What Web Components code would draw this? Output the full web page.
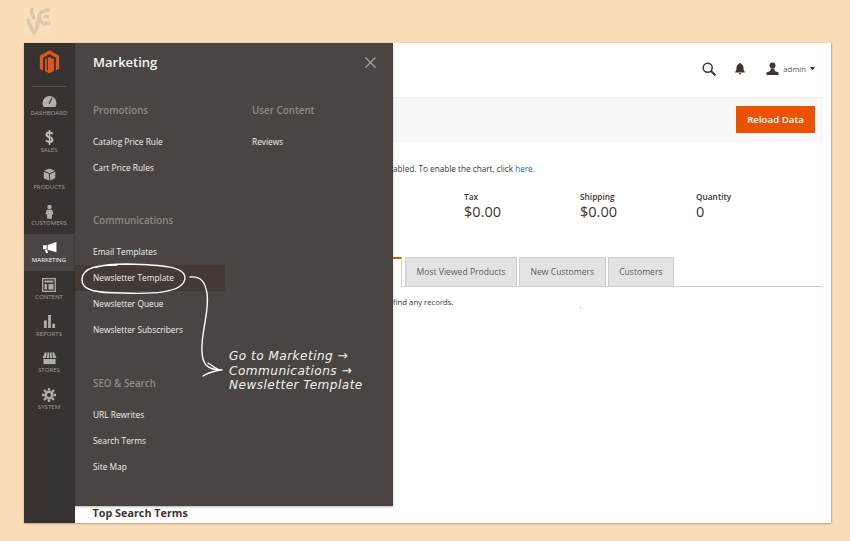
<!DOCTYPE html>
<html><head><meta charset="utf-8"><title>Marketing</title>
<style>
html,body{margin:0;padding:0;background:#fbdcb8;width:850px;height:541px;overflow:hidden;font-family:"Open Sans",sans-serif}
</style></head><body>
<rs-page>
  <rs-sidebar slot="side">
    <rs-nav label="DASHBOARD"><svg viewBox="0 0 16 14" width="15" height="13"><path fill="#b4b0ac" d="M8 1a7.500 7.500 0 0 0-7.500 7.500c0 1.800.5 3.200 1.400 4.500h12.200c.9-1.300 1.400-2.700 1.400-4.500A7.500 7.500 0 0 0 8 1z"/><path stroke="#373330" stroke-width="1.200" d="M7.500 9.500 10.800 3"/></svg></rs-nav>
    <rs-nav label="SALES"><svg viewBox="0 0 9 15" width="9" height="15"><path fill="none" stroke="#c4c0bc" stroke-width="1.900" d="M7.800 4C7 2.900 5.800 2.500 4.500 2.500 2.800 2.500 1.500 3.200 1.500 4.700c0 3 6 1.700 6 5 0 1.500-1.400 2.300-3 2.300-1.500 0-2.800-.6-3.500-1.700"/><path stroke="#c4c0bc" stroke-width="1.500" d="M4.500 0v15"/></svg></rs-nav>
    <rs-nav label="PRODUCTS"><svg viewBox="0 0 14 14" width="13" height="13"><path fill="#b0aca8" d="M7 .5 13 3 7 5.600 1 3zM.8 4l5.700 2.500v7L.8 11zM13.200 4 7.500 6.500v7l5.700-2.500z"/></svg></rs-nav>
    <rs-nav label="CUSTOMERS"><svg viewBox="0 0 10 16" width="9" height="15"><circle cx="5" cy="3" r="2.500" fill="#b0aca8"/><path fill="#b0aca8" d="M2 6h6l1.500 5H8l-.5 5h-5L2 11H.5z"/></svg></rs-nav>
    <rs-nav label="MARKETING" active><svg viewBox="0 0 16 13" width="15" height="12"><path fill="#fff" d="M15.500 0v11L6 8.300V3.200z"/><path fill="#fff" d="M1 3.600h4v4.300H1zM3 8.500h2.500l1 3.500H4.200z"/></svg></rs-nav>
    <rs-nav label="CONTENT"><svg viewBox="0 0 14 14" width="14" height="14"><path fill="none" stroke="#b0aca8" stroke-width="1.300" d="M.7.700h12.600v12.600H.7z"/><path fill="#b0aca8" d="M2.500 2.500h9v2h-9zM2.500 6h2.500v5.500H2.500zM6.500 6h5v5.500h-5z"/></svg></rs-nav>
    <rs-nav label="REPORTS"><svg viewBox="0 0 14 14" width="13" height="13"><path fill="#b0aca8" d="M1 6h3v8H1zM5.500 0h3v14h-3zM10 9.500h3V14h-3z"/></svg></rs-nav>
    <rs-nav label="STORES"><svg viewBox="0 0 16 14" width="15" height="13"><path fill="#b0aca8" d="M3 .5h10l2.500 6H.5z"/><path fill="#b0aca8" d="M1.500 7.500h13V13h-13z"/><path stroke="#373330" stroke-width=".8" d="M5.500 .5 4.500 6.500M8 .5v6M10.500 .5l1 6"/></svg></rs-nav>
    <rs-nav label="SYSTEM"><svg viewBox="0 0 14 14" width="14" height="14"><circle cx="7" cy="7" r="3.300" fill="none" stroke="#b0aca8" stroke-width="2.600"/><path stroke="#b0aca8" stroke-width="2.400" d="M7 0v2.500M7 11.500V14M0 7h2.500M11.500 7H14M2 2l1.800 1.800M10.200 10.200 12 12M12 2l-1.800 1.800M3.800 10.200 2 12"/></svg></rs-nav>
  </rs-sidebar>
  <rs-main slot="main"></rs-main>
  <rs-menu slot="main-over"></rs-menu>
</rs-page>
<script>
function def(name,html,init){
  customElements.define(name,class extends HTMLElement{
    constructor(){super();this.attachShadow({mode:'open'}).innerHTML=html;}
    connectedCallback(){if(init)init(this);}
  });
}
def('rs-page',`<style>
:host{display:block;width:850px;height:541px;box-sizing:border-box;padding:8px 19px 18px 24px}
.mark{display:block;height:27px;margin-bottom:8px;width:27px}
.win{display:flex;height:480px;box-shadow:0 1px 2px rgba(120,90,50,.45),1px 0 1px rgba(120,90,50,.2);background:#fff}
.content{position:relative;flex:1;min-width:0}
.over{position:absolute;left:0;top:0}
</style>
<svg class="mark" viewBox="0 0 27 27"><rect width="27" height="27" fill="#fadfbf"/><g fill="none" stroke="#dfc8a8" stroke-width="3.600" stroke-linecap="round"><path d="M8 1c-1 3 0 6 2 9M4 12c1 4 3 8 6 13M11 24c2-4 3-7 3-11"/><path d="M25 2c-6 0-10 3-10 7 0 5 5 8 10 6"/></g><path fill="#dfc8a8" d="M20 7h5v3h-5z"/></svg>
<div class="win"><slot name="side"></slot><div class="content"><slot name="main"></slot><div class="over"><slot name="main-over"></slot></div></div></div>`);

def('rs-sidebar',`<style>
:host{display:block;width:51px;flex:none;background:#373330}
.logo{height:43px;margin:0 9px 0 8px;border-bottom:1px solid #5b5652;display:flex;justify-content:center}
svg{margin-top:7px}
</style><div class="logo"><svg viewBox="0 0 24 28" width="21" height="25"><path fill="#e0561b" d="M12 0 23 6.400V21l-3.700 2.100V8.600L12 4.400 4.700 8.600v14.500L1 21V6.400z"/><path fill="#e0561b" d="M10.200 8.700 12 7.700l1.800 1v16.200L12 26.500l-5-2.900V9.900l2 -1.100v13.500l1.200.7zM13.800 9l3.200 .9v13.700l-3.200 1.800z"/></svg></div><slot></slot>`);

def('rs-nav',`<style>
:host{display:flex;flex-direction:column;align-items:center;height:36.75px;box-sizing:border-box;padding:6px 1px 0 0;color:#a29e9a;font:400 6.100px/8px "Open Sans",sans-serif}
:host([active]){background:#4a4542;color:#fff}
.i{height:16px;display:flex;align-items:center;justify-content:center}
.l{white-space:nowrap}
</style><div class="i"><slot></slot></div><div class="l"></div>`,el=>{el.shadowRoot.querySelector('.l').textContent=el.getAttribute('label')});

def('rs-stat',`<style>
:host{display:block;color:#41362f}
.l{font:600 8.300px/12px "Open Sans",sans-serif}
.v{font:400 14.500px/19px "Open Sans",sans-serif;margin-top:-1px}
</style><div class="l"><slot name="l"></slot></div><div class="v"><slot name="v"></slot></div>`);

def('rs-tab',`<style>
:host{display:flex;align-items:center;box-sizing:border-box;height:29px;padding:0 10.500px;background:#e3e3e3;border:1px solid #cfcfcf;border-bottom:0;color:#5e5e5e;font:400 8.600px/12px "Open Sans",sans-serif;white-space:nowrap}
</style><slot></slot>`);

def('rs-main',`<style>
:host{display:flex;flex-direction:column;height:480px;color:#41362f;font:400 8.200px/14px "Open Sans",sans-serif;position:relative}
.top{height:54px;display:flex;align-items:center;justify-content:flex-end;padding-right:16px;box-sizing:border-box;padding-bottom:3px}
.top svg{display:block}
.admin{color:#5e5a57;font-size:7.700px;margin:0 3px 0 4px}
.bar{height:45px;background:#f8f8f8;margin-right:8px;box-sizing:border-box;display:flex;align-items:center;justify-content:flex-end;padding-right:8px;box-shadow:inset 0 1px 0 #f0f0f0}
.btn{width:79px;height:27px;background:#eb5202;color:#fff;font:600 9.700px/27px "Open Sans",sans-serif;text-align:center}
.msg{margin:20px 0 0 318px;color:#41362f}
a{color:#1979c3;text-decoration:none}
.stats{display:grid;grid-template-columns:116px 116px 116px;margin:15px 0 0 389px}
.tabs{display:flex;margin:36px 8px 0 318px;height:29px;border-bottom:1px solid #cfcfcf;gap:2px}
.first{width:9px;box-sizing:border-box;border-top:2px solid #eb5202;border-right:1px solid #cfcfcf;height:30px;background:#fff;margin-right:1px}
.none{margin:8px 0 0 318px;font-size:7.750px;line-height:14px;color:#41362f}
.dot{position:absolute;left:505px;top:264px;width:1px;height:1px;background:#999}
.terms{margin:auto 0 3px 17.500px;font:700 10.800px/15px "Open Sans",sans-serif;color:#41362f}
</style>
<div class="top">
 <svg viewBox="0 0 14 14" width="14" height="14" style="margin-right:19px"><circle cx="5.700" cy="5.700" r="4.500" fill="none" stroke="#41362f" stroke-width="1.500"/><path stroke="#41362f" stroke-width="2" d="m9 9 4.400 4.400"/></svg>
 <svg viewBox="0 0 10 12" width="10" height="12" style="margin-right:21.500px"><path fill="#41362f" d="M5 0c.6 0 1 .4 1 1 1.800.5 2.500 2 2.500 4 0 2 .6 3 1.500 4v.6H0V9c.9-1 1.500-2 1.500-4S2.200 1.500 4 1c0-.6.4-1 1-1zM3.700 10.300h2.600a1.300 1.300 0 0 1-2.600 0z"/></svg>
 <svg viewBox="0 0 13 13" width="13" height="13"><circle cx="6.500" cy="3.600" r="3" fill="#41362f"/><path fill="#41362f" d="M4.700 6.500h3.600l.5 2.500 3.700 1.500V13H.5v-2.500L4.200 9z"/></svg>
 <span class="admin">admin</span>
 <svg viewBox="0 0 6 4" width="5" height="3.500" style="margin-left:1px"><path fill="#41362f" d="M0 0h6L3 4z"/></svg>
</div>
<div class="bar"><div class="btn">Reload Data</div></div>
<div class="msg">abled. To enable the chart, click <a>here.</a></div>
<div class="stats">
 <rs-stat><span slot="l">Tax</span><span slot="v">$0.00</span></rs-stat>
 <rs-stat><span slot="l">Shipping</span><span slot="v">$0.00</span></rs-stat>
 <rs-stat><span slot="l">Quantity</span><span slot="v">0</span></rs-stat>
</div>
<div class="tabs"><div class="first"></div><rs-tab>Most Viewed Products</rs-tab><rs-tab>New Customers</rs-tab><rs-tab>Customers</rs-tab></div>
<div class="none">find any records.</div>
<div class="dot"></div>
<div class="terms">Top Search Terms</div>`);

def('rs-group',`<style>
:host{display:block;margin-bottom:33px}
h3{margin:0 0 11px;font:600 9.800px/14px "Open Sans",sans-serif;color:#8f8a85}
</style><h3></h3><slot></slot>`,el=>{el.shadowRoot.querySelector('h3').textContent=el.getAttribute('title')});

def('rs-link',`<style>
:host{display:block;height:26px;margin-left:-18px;padding-left:18px;width:132px;color:#f2efec;font:400 8.350px/26px "Open Sans",sans-serif;white-space:nowrap}
:host([hot]){background:#433a35}
</style><slot></slot>`);

def('rs-note',`<style>
:host{position:absolute;left:0;top:0;width:318px;height:463px;pointer-events:none;display:block}
svg{position:absolute;left:0;top:0}
.t{position:absolute;left:154px;top:306px;color:#f6f3ef;font:italic 300 13px/14.500px "DejaVu Sans",sans-serif;letter-spacing:.5px;white-space:nowrap;transform:scaleX(.93);transform-origin:left top}
</style>
<svg width="318" height="463" viewBox="0 0 318 463" fill="none" stroke="#fff" stroke-width="1.400" stroke-linecap="round">
 <path d="M42 222c-18 0-34 2-35 14-1 12 16 14 40 14 26 1 62 1 63-15 0-12-24-13-58-14-12 0-24 1-30 3"/>
 <path d="M115 234c12-1 15 6 17 16 2 14-2 26-4 42-2 14-2 24 3 30 4 4 10 5 16 5"/>
 <path d="M133 320c5 3 8 6 12 7-4 1-11 2-17 6"/>
</svg>
<div class="t">Go to Marketing →<br>Communications →<br>Newsletter Template</div>`);

def('rs-menu',`<style>
:host{display:block;position:relative;width:318px;height:463px;background:#4a4542;box-shadow:0 1px 2px rgba(0,0,0,.3);color:#fff}
h2{position:absolute;margin:0;left:18px;top:10px;font:600 13px/19px "Open Sans",sans-serif;color:#f7f5f2}
.x{position:absolute;left:290px;top:14px}
.cols{display:flex;padding:61px 0 0 18px}
.c1{width:159px}
</style>
<h2>Marketing</h2>
<svg class="x" width="11" height="11" viewBox="0 0 11 11"><path d="M.5.500l10 10M10.500.500l-10 10" stroke="#aaa6a2" stroke-width="1.200"/></svg>
<div class="cols">
 <div class="c1">
  <rs-group title="Promotions"><rs-link>Catalog Price Rule</rs-link><rs-link>Cart Price Rules</rs-link></rs-group>
  <rs-group title="Communications" style="margin-bottom:34px"><rs-link>Email Templates</rs-link><rs-link hot>Newsletter Template</rs-link><rs-link>Newsletter Queue</rs-link><rs-link>Newsletter Subscribers</rs-link></rs-group>
  <rs-group title="SEO &amp; Search"><rs-link>URL Rewrites</rs-link><rs-link>Search Terms</rs-link><rs-link>Site Map</rs-link></rs-group>
 </div>
 <div><rs-group title="User Content"><rs-link>Reviews</rs-link></rs-group></div>
</div>
<rs-note></rs-note>`);
</script>
</body></html>
